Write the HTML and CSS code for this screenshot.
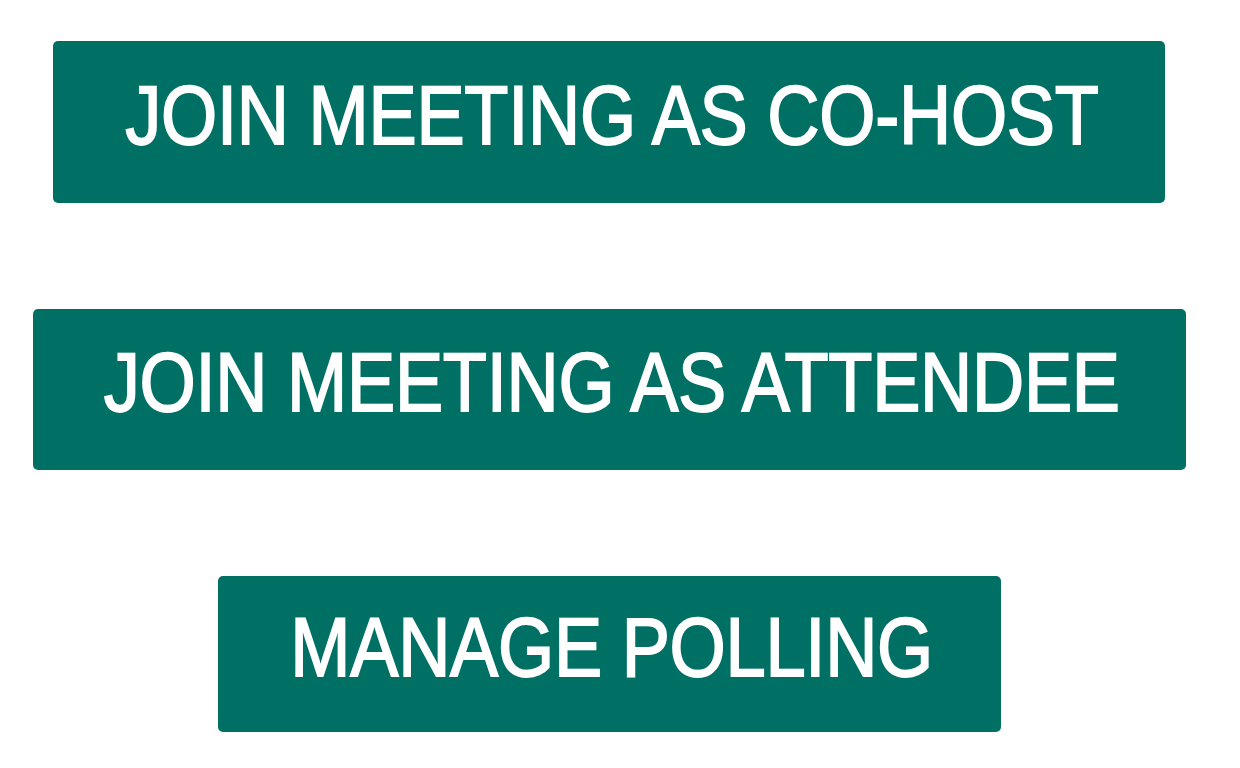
FILE: index.html
```html
<!DOCTYPE html>
<html>
<head>
<meta charset="utf-8">
<link rel="stylesheet" href="styles.css">
</head>
<body>
<div class="actions">
  <button class="btn btn-cohost"><span class="label">JOIN MEETING AS CO-HOST</span></button>
  <button class="btn btn-attendee"><span class="label">JOIN MEETING AS ATTENDEE</span></button>
  <button class="btn btn-polling"><span class="label">MANAGE POLLING</span></button>
</div>
</body>
</html>
```
FILE: styles.css
```css
html, body {
  margin: 0;
  padding: 0;
  background: #ffffff;
}
.actions {
  width: 1218px;
  padding-top: 41px;
  display: flex;
  flex-direction: column;
  align-items: center;
  gap: 106px;
}
.btn {
  display: flex;
  align-items: center;
  justify-content: center;
  border: none;
  border-radius: 5px;
  background: #007065;
  color: #ffffff;
  font-family: "Liberation Sans", Arial, sans-serif;
  font-size: 84px;
  line-height: 1;
  padding: 0 0 15px 5px;
  height: 162px;
  box-sizing: border-box;
  margin: 0;
  white-space: nowrap;
  overflow: visible;
}
.label {
  display: inline-block;
  letter-spacing: -0.3px;
  transform: scaleX(0.86);
  -webkit-text-stroke: 1.8px #ffffff;
}
.btn-cohost { width: 1112px; }
.btn-attendee { width: 1153px; height: 161px; }
.btn-polling { width: 783px; height: 156px; }
```
